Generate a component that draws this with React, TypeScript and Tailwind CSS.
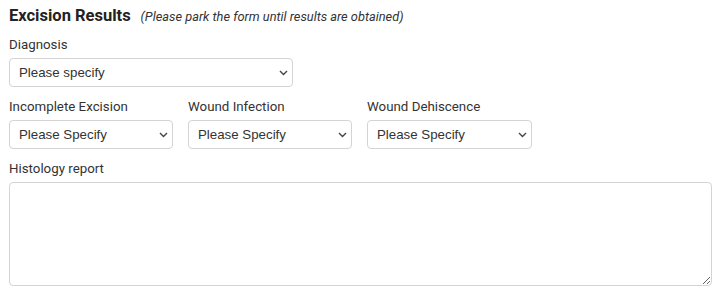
function Chevron() {
  return (
    <svg width="9" height="6" viewBox="0 0 9 6" fill="none" className="text-[#444]">
      <path d="M1 1l3.5 3.5L8 1" stroke="currentColor" strokeWidth="1.4" />
    </svg>
  );
}

function Select({ value, className }: { value: string; className: string }) {
  return (
    <div
      className={`flex items-center justify-between h-[29px] rounded-[4px] border border-[#d4d4d4] bg-white pl-[9px] pr-[4px] ${className}`}
    >
      <span
        className="text-[13.3px] text-[#333]"
        style={{ fontFamily: '"Liberation Sans", Arial, sans-serif' }}
      >
        {value}
      </span>
      <Chevron />
    </div>
  );
}

function Label({ children }: { children: string }) {
  return <div className="text-[13.3px] leading-[18px] text-[#333] mb-[4px]">{children}</div>;
}

export default function App() {
  return (
    <div
      className="w-[720px] h-[295px] bg-white px-[9px] pt-[4px]"
      style={{ fontFamily: "Roboto, sans-serif" }}
    >
      <div className="flex items-baseline gap-[10px] h-[24px]">
        <h2 className="text-[16.5px] font-bold text-[#222]">Excision Results</h2>
        <span className="text-[12.8px] italic text-[#333]">
          (Please park the form until results are obtained)
        </span>
      </div>
      <div className="mt-[8px]">
        <Label>Diagnosis</Label>
        <Select value="Please specify" className="w-[284px]" />
      </div>
      <div className="flex gap-[15px] mt-[11px]">
        <div>
          <Label>Incomplete Excision</Label>
          <Select value="Please Specify" className="w-[164px]" />
        </div>
        <div>
          <Label>Wound Infection</Label>
          <Select value="Please Specify" className="w-[164px]" />
        </div>
        <div>
          <Label>Wound Dehiscence</Label>
          <Select value="Please Specify" className="w-[165px]" />
        </div>
      </div>
      <div className="mt-[11px]">
        <Label>Histology report</Label>
        <textarea className="block w-[703px] h-[104px] rounded-[4px] border border-[#d4d4d4] bg-white outline-none" />
      </div>
    </div>
  );
}
